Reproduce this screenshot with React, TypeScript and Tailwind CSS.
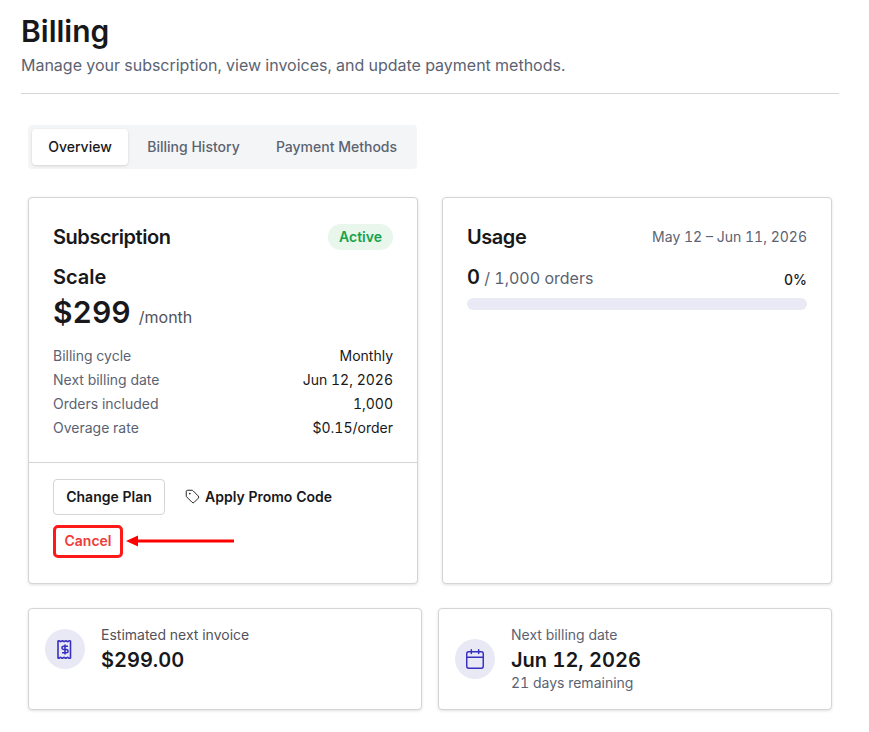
import { Calendar, Tag } from 'lucide-react';

const DETAILS = [
  ['Billing cycle', 'Monthly'],
  ['Next billing date', 'Jun 12, 2026'],
  ['Orders included', '1,000'],
  ['Overage rate', '$0.15/order'],
];

const CARD = 'bg-white border border-[#d4d4d8] rounded-[4px] shadow-[0_1px_3px_rgba(0,0,0,0.12)]';

function InvoiceIcon() {
  return (
    <svg width="16" height="19" viewBox="0 0 16 19" fill="none" stroke="#3730c0" strokeWidth="1.6">
      <path d="M1 1.2 q0.9 -0.8 1.75 0 t1.75 0 t1.75 0 t1.75 0 t1.75 0 t1.75 0 t2 0 V17.8 q-1 0.8 -2 0 t-1.75 0 t-1.75 0 t-1.75 0 t-1.75 0 t-1.75 0 t-1.75 0 Z" />
      <path d="M11 6.2 H6.6 a1.6 1.6 0 0 0 0 3.3 H9.4 a1.6 1.6 0 0 1 0 3.3 H5 M8 4.6 V14.4" />
    </svg>
  );
}

export default function App() {
  return (
    <div className="w-[869px] h-[732px] bg-white overflow-hidden pt-[13px] pl-[21px] text-[#18181b] tabular-nums font-['Inter',sans-serif]">
      <h1 className="text-[30px] leading-[36px] font-semibold">Billing</h1>
      <p className="mt-[4px] text-[16px] leading-[24px] tracking-[-0.01px] text-[#5b6372]">Manage your subscription, view invoices, and update payment methods.</p>
      <div className="mt-[16px] w-[818px] h-px bg-[#d4d4d8]" />

      <div className="ml-[7px] w-[804px]">
        <div className="mt-[31px] w-[389px] h-[44px] bg-[#f4f5f6] rounded-[4px] pl-[4px] py-[4px] flex items-center text-[14px] font-medium text-[#5b6372]">
          <div className="w-[96px] h-[36px] pb-[2px] bg-white rounded-[4px] shadow-[0_1px_3px_rgba(0,0,0,0.14)] flex items-center justify-center text-[#18181b]">Overview</div>
          <div className="w-[131px] pb-[2px] text-center">Billing History</div>
          <div className="ml-[11px] w-[133px] pb-[2px] text-center">Payment Methods</div>
        </div>

        <div className="mt-[28px] flex gap-[24px]">
          <div className={`${CARD} w-[390px] h-[387px]`}>
            <div className="h-[265px] px-[24px] pt-[26px] border-b border-[#d4d4d8]">
              <div className="flex items-center justify-between h-[26px]">
                <span className="text-[20px] font-semibold tracking-[-0.45px]">Subscription</span>
                <span className="h-[26px] w-[65px] pb-[2px] rounded-full bg-[#e9f6ec] text-[#16a34a] text-[14px] font-semibold flex items-center justify-center">Active</span>
              </div>
              <div className="mt-[13px] text-[20px] leading-[28px] font-semibold">Scale</div>
              <div className="mt-[1px] flex items-baseline h-[40px]">
                <span className="text-[30px] leading-[40px] font-semibold">$299</span>
                <span className="ml-[8px] text-[16px] text-[#52525b]">/month</span>
              </div>
              <div className="mt-[11px] flex flex-col">
                {DETAILS.map(([label, value]) => (
                  <div key={label} className="flex justify-between h-[24px] items-center text-[14px]">
                    <span className="text-[#5b6372]">{label}</span>
                    <span>{value}</span>
                  </div>
                ))}
              </div>
            </div>
            <div className="relative px-[24px] pt-[16px]">
              <div className="flex items-center h-[36px] text-[14px] font-semibold">
                <button type="button" className="h-[36px] w-[112px] pb-[2px] border border-[#d4d4d8] rounded-[4px]">Change Plan</button>
                <span className="ml-[20px] pb-[2px] flex items-center gap-[5px]"><Tag size={15} strokeWidth={1.5} />Apply Promo Code</span>
              </div>
              <button type="button" className="mt-[10px] block h-[33px] w-[70px] border-[3px] border-[#ff1a1a] rounded-[5px] text-[14px] leading-[24px] pb-[2px] font-semibold text-[#ef3b3b]">Cancel</button>
              <svg className="absolute left-[96px] top-[70px]" width="110" height="16" viewBox="0 0 110 16">
                <path d="M109 8 H12" stroke="#ff0000" strokeWidth="3" />
                <path d="M1 8 L13 2.5 V13.5 Z" fill="#ff0000" />
              </svg>
            </div>
          </div>

          <div className={`${CARD} w-[390px] h-[387px] px-[24px] pt-[26px]`}>
            <div className="flex items-center justify-between h-[26px]">
              <span className="text-[20px] font-semibold tracking-[-0.45px]">Usage</span>
              <span className="pb-[2px] text-[14px] text-[#5b6372]">May 12 – Jun 11, 2026</span>
            </div>
            <div className="mt-[14px] flex items-end justify-between h-[28px]">
              <span className="text-[16px] text-[#5b6372]"><span className="text-[20px] font-semibold text-[#18181b]">0</span> / 1,000 orders</span>
              <span className="text-[14px] leading-[24px] font-medium">0%</span>
            </div>
            <div className="mt-[6px] h-[12px] rounded-full bg-[#eaeaf7]" />
          </div>
        </div>

        <div className="mt-[24px] flex gap-[16px]">
          <div className={`${CARD} w-[394px] h-[102px] pl-[16px] pt-[20px] flex items-start gap-[16px]`}>
            <div className="w-[40px] h-[40px] rounded-full bg-[#e9e9f6] flex items-center justify-center"><InvoiceIcon /></div>
            <div className="-mt-[4px]">
              <div className="text-[14px] leading-[20px] text-[#52525b]">Estimated next invoice</div>
              <div className="mt-[1px] text-[20px] leading-[28px] font-semibold">$299.00</div>
            </div>
          </div>
          <div className={`${CARD} w-[394px] h-[102px] pl-[16px] pt-[30px] flex items-start gap-[16px]`}>
            <div className="w-[40px] h-[40px] rounded-full bg-[#e9e9f6] flex items-center justify-center"><Calendar size={22} strokeWidth={1.6} color="#3730c0" /></div>
            <div className="-mt-[14px]">
              <div className="text-[14px] leading-[20px] text-[#5b6372]">Next billing date</div>
              <div className="mt-[1px] text-[20px] leading-[28px] font-semibold">Jun 12, 2026</div>
              <div className="-mt-[1px] text-[14px] leading-[20px] text-[#5b6372]">21 days remaining</div>
            </div>
          </div>
        </div>
      </div>
    </div>
  );
}
